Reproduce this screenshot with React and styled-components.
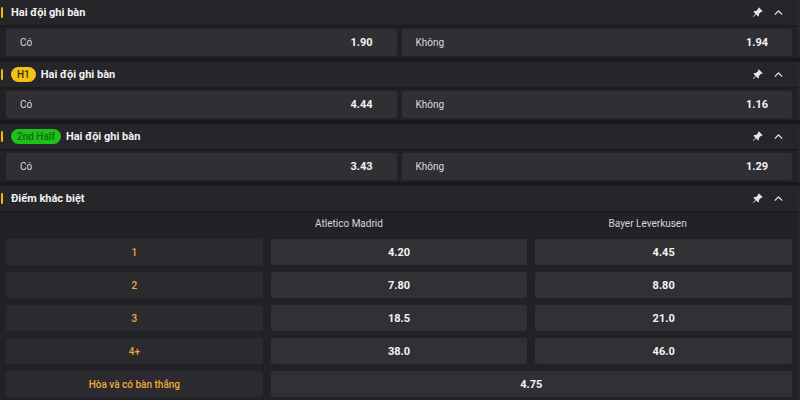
import React from "react";
import styled, { createGlobalStyle } from "styled-components";
import { ChevronUp } from "lucide-react";
import { BsPinAngleFill } from "react-icons/bs";

const GlobalStyle = createGlobalStyle`
  html, body {
    margin: 0;
    padding: 0;
    background: #19191c;
    overflow: hidden;
  }
  body {
    font-family: Roboto, "Liberation Sans", sans-serif;
    color: #eaeaea;
  }
`;

const markets = [
  { title: "Hai đội ghi bàn", badge: null, yes: "1.90", no: "1.94" },
  { title: "Hai đội ghi bàn", badge: { text: "H1", tone: "yellow" }, yes: "4.44", no: "1.16" },
  { title: "Hai đội ghi bàn", badge: { text: "2nd Half", tone: "green" }, yes: "3.43", no: "1.29" },
];

const goalRows = [
  { label: "1", home: "4.20", away: "4.45" },
  { label: "2", home: "7.80", away: "8.80" },
  { label: "3", home: "18.5", away: "21.0" },
  { label: "4+", home: "38.0", away: "46.0" },
];

const MarketHeader = ({ title, badge }) => (
  <Header>
    <Marker />
    {badge && <Badge $tone={badge.tone}>{badge.text}</Badge>}
    <Title>{title}</Title>
    <Actions>
      <BsPinAngleFill size={11} />
      <ChevronUp size={13} strokeWidth={2.6} />
    </Actions>
  </Header>
);

const App = () => {
  return (
    <>
      <GlobalStyle />
      <Page>
        {markets.map((m, i) => (
          <Section key={i}>
            <MarketHeader title={m.title} badge={m.badge} />
            <BetRow>
              <BetCell>
                <span>Có</span>
                <Price>{m.yes}</Price>
              </BetCell>
              <BetCell>
                <span>Không</span>
                <Price>{m.no}</Price>
              </BetCell>
            </BetRow>
          </Section>
        ))}

        <Section>
          <MarketHeader title="Điểm khác biệt" />
          <Table>
            <span />
            <TeamName $shift={50}>Atletico Madrid</TeamName>
            <TeamName $shift={16}>Bayer Leverkusen</TeamName>
            {goalRows.map((r) => (
              <React.Fragment key={r.label}>
                <LabelCell>{r.label}</LabelCell>
                <ValueCell>{r.home}</ValueCell>
                <ValueCell>{r.away}</ValueCell>
              </React.Fragment>
            ))}
            <LabelCell>Hòa và có bàn thắng</LabelCell>
            <ValueCell $wide>4.75</ValueCell>
          </Table>
        </Section>
      </Page>
    </>
  );
};

const Page = styled.div`
  display: flex;
  flex-direction: column;
  gap: 4px;
  width: 800px;
`;

const Section = styled.section`
  background: #222226;
  border-right: 2px solid #29292d;
`;

const Header = styled.div`
  height: 25px;
  display: flex;
  align-items: center;
  padding: 0 13px 0 1px;
  background: #26262a;
  border-bottom: 2px solid #1c1c1f;
`;

const Marker = styled.span`
  width: 2px;
  height: 11px;
  background: #f0b90b;
  border-radius: 1px;
  margin-right: 8px;
`;

const Badge = styled.span`
  display: inline-flex;
  align-items: center;
  height: 15px;
  padding: 0 6px;
  margin-right: 5px;
  border-radius: 8px;
  font-size: 10px;
  font-weight: 500;
  background: ${(p) => (p.$tone === "green" ? "#1ec019" : "#f3c21a")};
  color: ${(p) => (p.$tone === "green" ? "#0e6d0b" : "#3b2e00")};
`;

const Title = styled.span`
  font-size: 11px;
  font-weight: 700;
  color: #f2f2f2;
`;

const Actions = styled.div`
  margin-left: auto;
  display: flex;
  align-items: center;
  gap: 9px;
  color: #e6e6e6;
`;

const BetRow = styled.div`
  display: grid;
  grid-template-columns: 1fr 1fr;
  gap: 5px;
  padding: 2px 6px 2px 6px;
`;

const BetCell = styled.div`
  height: 27px;
  display: flex;
  align-items: center;
  justify-content: space-between;
  padding: 0 24px 0 14px;
  background: #2f2f34;
  border-radius: 2px;
  font-size: 10px;
  color: #dcdcdc;
`;

const Price = styled.span`
  font-size: 11px;
  font-weight: 700;
  color: #f4f4f4;
`;

const Table = styled.div`
  display: grid;
  grid-template-columns: 1fr 1fr 1fr;
  grid-template-rows: 17px repeat(5, 26px);
  row-gap: 7px;
  column-gap: 8px;
  padding: 2px 6px 5px 6px;
`;

const TeamName = styled.span`
  display: flex;
  align-items: center;
  justify-content: center;
  padding-right: ${(p) => p.$shift * 2}px;
  font-size: 10px;
  color: #d6d6d6;
`;

const LabelCell = styled.div`
  display: flex;
  align-items: center;
  justify-content: center;
  background: #2a2a2f;
  border-radius: 2px;
  font-size: 10px;
  font-weight: 500;
  color: #f2a93b;
`;

const ValueCell = styled.div`
  grid-column: ${(p) => (p.$wide ? "span 2" : "auto")};
  display: flex;
  align-items: center;
  justify-content: center;
  background: #303035;
  border-radius: 2px;
  font-size: 11px;
  font-weight: 700;
  color: #f4f4f4;
`;

export default App;
